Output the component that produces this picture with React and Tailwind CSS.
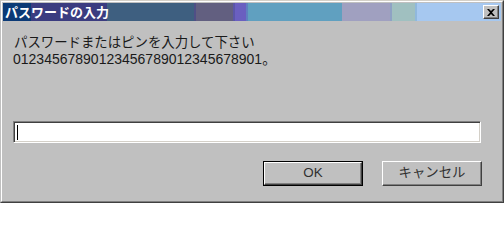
import React from 'react';

const jp = { fontFamily: '"Liberation Sans", "Noto Sans CJK JP", sans-serif' };

// title bar is a strip of colour blocks (captured gradient artefacts)
const stripes = [
  ['w-[28px]', 'bg-[#0b3a76]'],
  ['w-[76px]', 'bg-[#3b3c80]'],
  ['w-[87px]', 'bg-[#3e5f80]'],
  ['w-[2px]', 'bg-[#4f4f86]'],
  ['w-[37px]', 'bg-[#625f80]'],
  ['w-[2px]', 'bg-[#5b56a8]'],
  ['w-[11px]', 'bg-[#6a5fc0]'],
  ['w-[2px]', 'bg-[#5f80c0]'],
  ['w-[94px]', 'bg-[#60a0c0]'],
  ['w-[48px]', 'bg-[#a0a0c0]'],
  ['w-[2px]', 'bg-[#8fa2c4]'],
  ['w-[23px]', 'bg-[#a0c0c0]'],
  ['w-[2px]', 'bg-[#90b8dc]'],
  ['flex-1', 'bg-[#a6c8f0]'],
];

function TitleBar() {
  return (
    <div className="relative h-[18px] shrink-0 flex">
      {stripes.map(([w, bg], i) => (
        <div key={i} className={`${w} ${bg} h-full`} />
      ))}
      <div className="absolute left-[2px] top-0 h-full flex items-center text-white font-bold text-[13px] leading-none" style={jp}>
        パスワードの入力
      </div>
      <div className="absolute right-[2px] top-[2px] w-[16px] h-[14px] bg-[#c0c0c0] border border-t-white border-l-white border-r-[#404040] border-b-[#404040] shadow-[inset_-1px_-1px_0_#808080] flex items-center justify-center">
        <svg width="8" height="7" viewBox="0 0 8 7">
          <path d="M0 0h2l2 2 2-2h2L5 3.5 8 7H6L4 5 2 7H0l3-3.5z" fill="#000" />
        </svg>
      </div>
    </div>
  );
}

function Button({ label, isDefault }) {
  return (
    <div className={`w-[100px] h-[25px] ${isDefault ? 'border border-black' : ''}`}>
      <div className="w-full h-full bg-[#c0c0c0] border border-t-white border-l-white border-r-[#404040] border-b-[#404040] shadow-[inset_-1px_-1px_0_#808080] flex items-center justify-center text-[13.4px] text-[#303030]" style={jp}>
        {label}
      </div>
    </div>
  );
}

export default function App() {
  return (
    <div className="w-[504px] min-h-[203px] flex flex-col border border-t-[#d4d0c8] border-l-[#c0c0c0] border-r-[#404040] border-b-[#404040] bg-[#c0c0c0]">
      <div className="flex-1 flex flex-col border border-t-white border-l-white border-r-[#808080] border-b-[#808080] p-px">
        <TitleBar />
        <div className="flex-1 flex flex-col pt-[14px] pb-[14px]">
          <div className="pl-[11px] text-[13.4px] leading-[16px] text-[#1a1a1a]" style={jp}>
            パスワードまたはピンを入力して下さい
          </div>
          <div className="pl-[10px] text-[14px] leading-[16px] text-[#1a1a1a]" style={jp}>
            01234567890123456789012345678901。
          </div>
          <div className="ml-[10px] mt-[54px] w-[468px] h-[22px] bg-white border border-t-[#808080] border-l-[#808080] border-r-white border-b-white shadow-[inset_1px_1px_0_#404040,inset_-1px_-1px_0_#d4d0c8] flex items-center">
            <div className="ml-[3px] w-px h-[15px] bg-black" />
          </div>
          <div className="mt-[18px] flex justify-end gap-[19px] pr-[19px]">
            <Button label="OK" isDefault />
            <Button label="キャンセル" />
          </div>
        </div>
      </div>
    </div>
  );
}
